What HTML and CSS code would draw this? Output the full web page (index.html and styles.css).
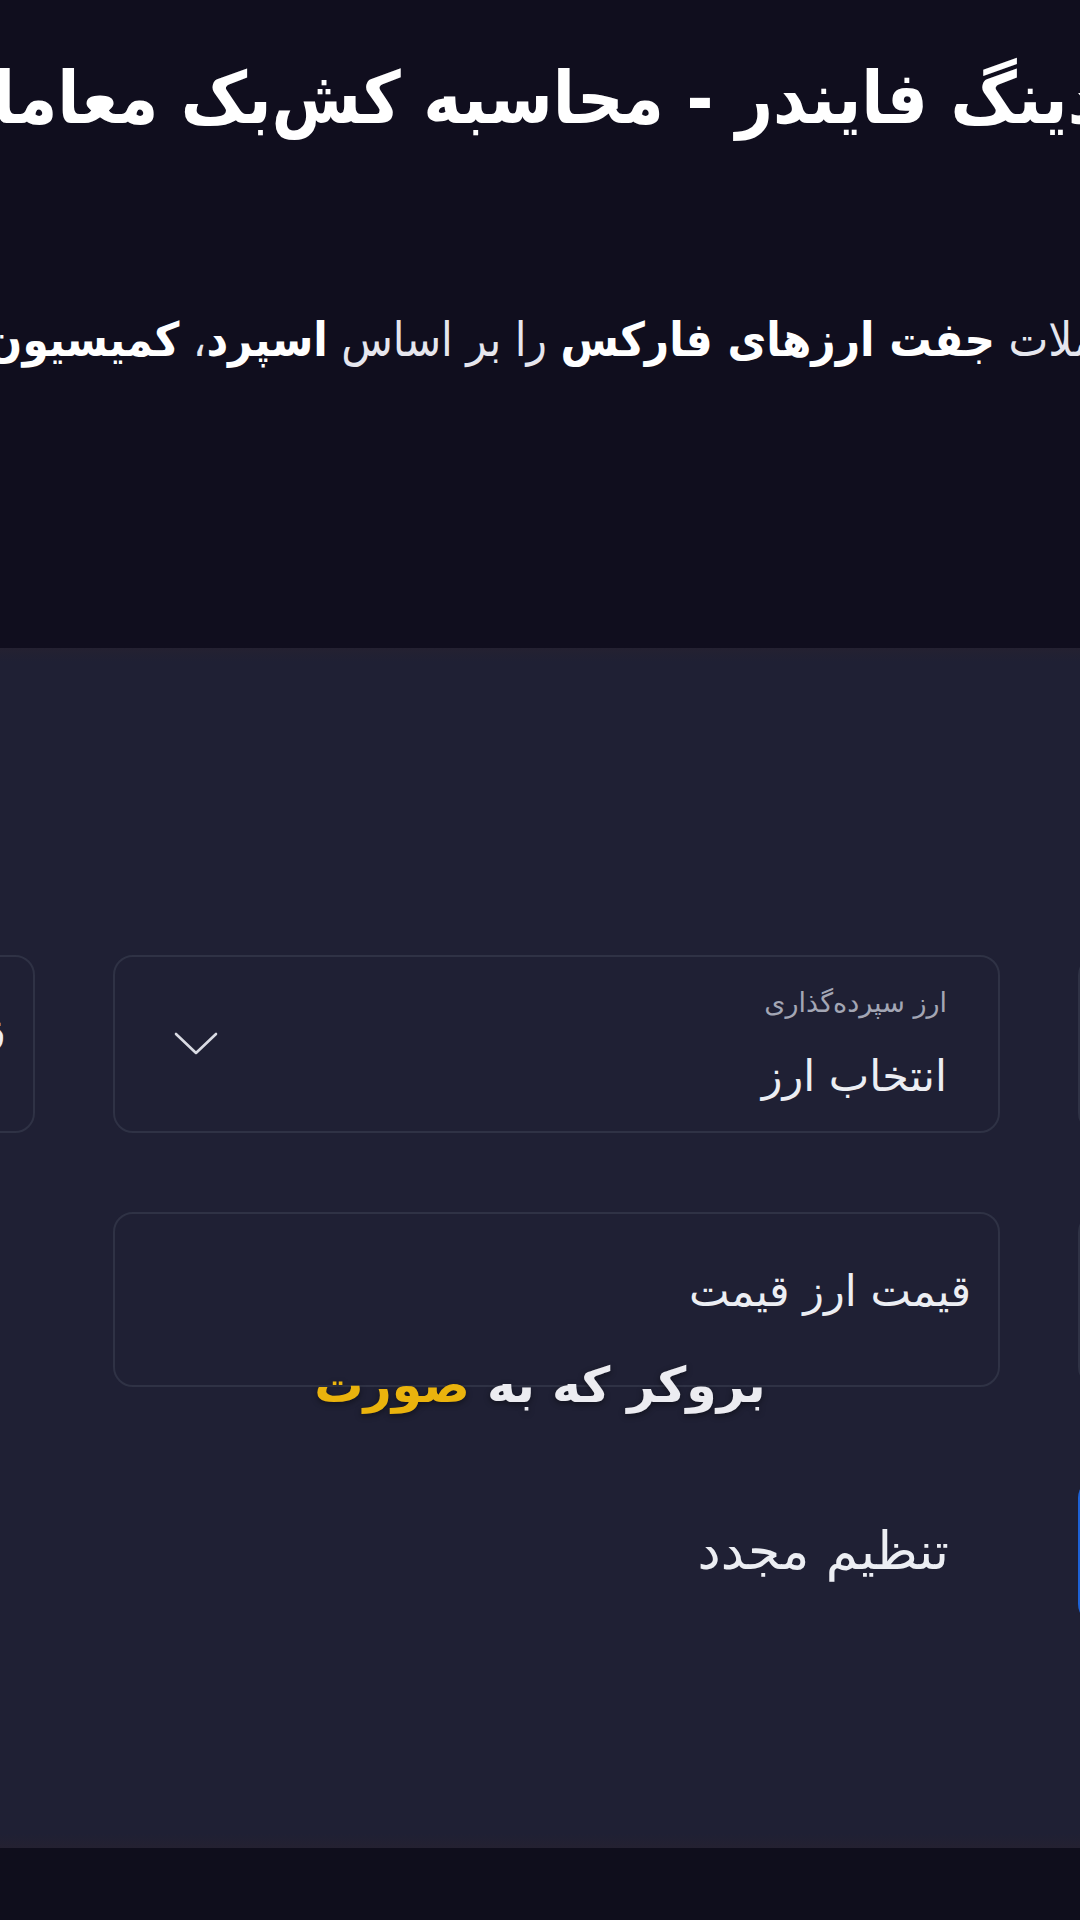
FILE: index.html
```html
<!DOCTYPE html>
<html lang="fa" dir="rtl">
<head>
<meta charset="utf-8">
<title>محاسبه کش‌بک</title>
<link rel="stylesheet" href="styles.css">
</head>
<body>
<div class="screen">
  <header class="hero">
    <h1 class="hero-title">تریدینگ فایندر - محاسبه کش‌بک معاملات</h1>
    <p class="hero-sub">معاملات <b>جفت ارزهای فارکس</b> را بر اساس <b>اسپرد</b>، <b>کمیسیون</b> و حجم معاملات</p>
  </header>
  <main class="panel">
    <div class="grid">
      <div class="field"></div>
      <div class="field select">
        <div class="select-text">
          <span class="field-label">ارز سپرده‌گذاری</span>
          <span class="field-value">انتخاب ارز</span>
        </div>
        <svg class="chevron" viewBox="0 0 46 26" width="46" height="26" aria-hidden="true">
          <polyline points="3,3 23,22 43,3" fill="none" stroke="#d9dbe3" stroke-width="2.6" stroke-linecap="round" stroke-linejoin="round"/>
        </svg>
      </div>
      <div class="field input"><span class="field-ph">قیمت پایه</span></div>
      <div class="field"></div>
      <div class="field input"><span class="field-ph">قیمت ارز قیمت</span></div>
      <div class="cell-empty"></div>
      <button class="btn btn-primary" type="button">محاسبه</button>
      <button class="btn btn-ghost" type="button">تنظیم مجدد</button>
      <div class="cell-empty"></div>
    </div>
    <div class="caption">بروکر که به <span class="caption-hl">صورت</span></div>
  </main>
  <footer class="bottom"></footer>
</div>
</body>
</html>
```

FILE: styles.css
```css
html, body {
  margin: 0;
  padding: 0;
  background: #100e1e;
}

body {
  width: 1080px;
  height: 1920px;
  overflow: hidden;
  font-family: "DejaVu Sans", sans-serif;
  color: #ffffff;
}

.screen {
  width: 1080px;
  height: 1920px;
  overflow: hidden;
  display: flex;
  flex-direction: column;
  direction: rtl;
}

.hero {
  height: 648px;
  flex: none;
  background: #100e1e;
  display: flex;
  flex-direction: column;
  padding-top: 48px;
  box-sizing: border-box;
}

.hero-title {
  margin: 0 -114px 0 0;
  font-family: "DejaVu Sans Condensed", "DejaVu Sans", sans-serif;
  font-size: 72px;
  line-height: 100px;
  font-weight: 700;
  white-space: nowrap;
  text-align: right;
  color: #ffffff;
}

.hero-sub {
  margin: 142px -72px 0 0;
  font-family: "DejaVu Sans Condensed", "DejaVu Sans", sans-serif;
  font-size: 47px;
  line-height: 100px;
  font-weight: 400;
  white-space: nowrap;
  text-align: right;
  color: #e6e6ee;
}

.hero-sub b {
  font-weight: 700;
  color: #ffffff;
}

.panel {
  position: relative;
  height: 1200px;
  flex: none;
  box-sizing: border-box;
  padding-top: 307px;
  background: linear-gradient(#242131 0, #1f2034 14px, #1f2034 calc(100% - 14px), #242131 100%);
}

.grid {
  width: 2817px;
  margin-right: -885px;
  display: grid;
  grid-template-columns: 887px 887px 887px;
  grid-template-rows: 178px 175px 158px;
  column-gap: 78px;
  row-gap: 79px;
}

.field {
  border: 2px solid #2f3245;
  border-radius: 20px;
  box-sizing: border-box;
  display: flex;
  align-items: center;
}

.select {
  justify-content: space-between;
  padding: 0 51px 0 58px;
}

.select-text {
  align-self: flex-start;
  display: flex;
  flex-direction: column;
  padding-top: 26px;
}

.field-label {
  font-size: 27px;
  line-height: 40px;
  color: #a3a6b4;
}

.field-value {
  margin-top: 25px;
  font-size: 43px;
  line-height: 56px;
  color: #eceef3;
}

.chevron {
  display: block;
  flex: none;
}

.input {
  padding: 0 27px 18px 27px;
}

.field-ph {
  font-size: 43px;
  line-height: 56px;
  color: #eceef3;
  white-space: nowrap;
}

.btn {
  margin-top: 12px;
  border: none;
  border-radius: 20px;
  font-family: "DejaVu Sans", sans-serif;
  font-size: 52px;
  line-height: 60px;
  cursor: pointer;
}

.btn-primary {
  background: #1d62d6;
  color: #ffffff;
}

.btn-ghost {
  background: transparent;
  color: #eceef3;
  text-align: right;
  padding: 0 51px;
}

.caption {
  position: absolute;
  top: 703px;
  left: 0;
  right: 0;
  text-align: center;
  font-size: 49px;
  line-height: 70px;
  font-weight: 700;
  color: #ececf1;
  text-shadow: 0 2px 6px rgba(0, 0, 0, 0.45);
  white-space: nowrap;
}

.caption-hl {
  color: #eab30d;
}

.bottom {
  flex: 1;
  background: #0f0e1c;
}
```
